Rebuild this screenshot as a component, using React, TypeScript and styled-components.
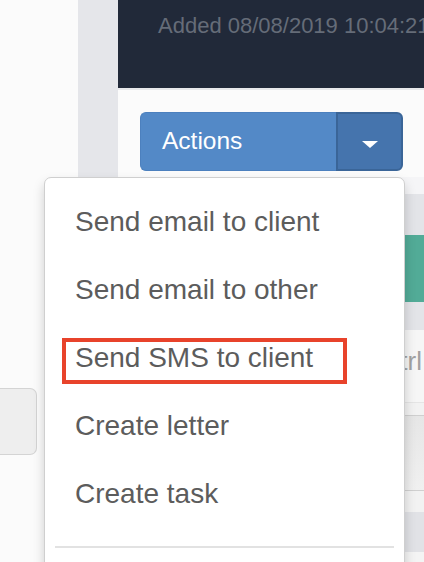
import styled, { createGlobalStyle } from "styled-components";

const GlobalStyle = createGlobalStyle`
    html, body {
        margin: 0;
        padding: 0;
        background: #fbfbfb;
    }
    *, *::before, *::after {
        box-sizing: border-box;
    }
`;

const Page = styled.div`
    width: 424px;
    height: 562px;
    overflow: hidden;
    display: flex;
    flex-direction: row;
    font-family: "Liberation Sans", Arial, Helvetica, sans-serif;
    background: #fbfbfb;
`;

const Sidebar = styled.div`
    width: 78px;
    flex-shrink: 0;
    padding-top: 388px;
    background: #fbfbfb;
`;

const SideButton = styled.div`
    width: 37px;
    height: 67px;
    background: #eeeeee;
    border: 1.5px solid #d4d4d4;
    border-left: none;
    border-radius: 0 7px 7px 0;
`;

const Gutter = styled.div`
    width: 40px;
    flex-shrink: 0;
    background: #e5e6ea;
`;

const Main = styled.div`
    flex: 1;
    min-width: 0;
    display: flex;
    flex-direction: column;

    & > * {
        flex-shrink: 0;
    }
`;

const Header = styled.div`
    height: 90px;
    padding: 13px 0 0 40px;
    background: #212939;
    color: #656c78;
    font-size: 22px;
    line-height: 26px;
    white-space: nowrap;
    overflow: hidden;
    border-bottom: 2px solid #e8e9ec;
`;

const ButtonBar = styled.div`
    padding: 22px 21px 6px 22px;
    background: #fbfbfb;
`;

const ActionsGroup = styled.div`
    position: relative;
    display: flex;
    height: 59px;
`;

const ActionsButton = styled.div`
    flex: 1;
    display: flex;
    align-items: center;
    padding-left: 21px;
    background: #5389c7;
    border: 1px solid #4c80be;
    border-right: none;
    border-radius: 6px 0 0 6px;
    color: #ffffff;
    font-size: 24.5px;
    line-height: 1;
`;

const CaretButton = styled.div`
    width: 67px;
    display: flex;
    justify-content: center;
    align-items: center;
    background: #4574ad;
    border: 2px solid #3a6598;
    border-radius: 0 6px 6px 0;
`;

const Caret = styled.span`
    margin-top: 5px;
    width: 0;
    height: 0;
    border-top: 7px solid #ffffff;
    border-left: 8px solid transparent;
    border-right: 8px solid transparent;
`;

const Menu = styled.div`
    position: absolute;
    top: calc(100% + 6px);
    left: -96px;
    width: 361px;
    height: 420px;
    padding: 10px 0 40px;
    background: #ffffff;
    border: 1px solid #cfcfcf;
    border-radius: 7px;
    box-shadow: 0 6px 12px rgba(0, 0, 0, 0.175);
    z-index: 10;
`;

const MenuItem = styled.div<{ $marked?: boolean }>`
    position: relative;
    height: 68px;
    padding-left: 30px;
    color: #5c5c5c;
    font-size: 28px;
    line-height: 68px;
    white-space: nowrap;

    ${({ $marked }) => $marked && `
        &::after {
            content: "";
            position: absolute;
            left: 17px;
            top: 14px;
            width: 285px;
            height: 46px;
            border: 4px solid #e8432b;
        }
    `}
`;

const MenuDivider = styled.div`
    height: 2px;
    margin: 18px 10px 0;
    background: #e2e2e2;
`;

const Band = styled.div<{ $h: number; $bg: string }>`
    height: ${({ $h }) => $h}px;
    background: ${({ $bg }) => $bg};
`;

const InputBand = styled.div`
    height: 72px;
    padding: 16px 2px 0 0;
    background: #f6f6f6;
    color: #a2a2a2;
    font-size: 26px;
    line-height: 30px;
    text-align: right;
`;

const items = [
    "Send email to client",
    "Send email to other",
    "Send SMS to client",
    "Create letter",
    "Create task",
];

export default function App() {
    return (
        <>
            <GlobalStyle />
            <Page>
                <Sidebar>
                    <SideButton />
                </Sidebar>
                <Gutter />
                <Main>
                    <Header>Added 08/08/2019 10:04:21</Header>

                    <ButtonBar>
                        <ActionsGroup>
                            <ActionsButton>Actions</ActionsButton>
                            <CaretButton>
                                <Caret />
                            </CaretButton>

                            <Menu>
                                {items.map((label) => (
                                    <MenuItem key={label} $marked={label === "Send SMS to client"}>
                                        {label}
                                    </MenuItem>
                                ))}
                                <MenuDivider />
                            </Menu>
                        </ActionsGroup>
                    </ButtonBar>

                    <Band $h={17} $bg="#f5f5f7" />
                    <Band $h={41} $bg="#e3e4e8" />
                    <Band $h={67} $bg="#52ab97" />
                    <Band $h={28} $bg="#e3e4e8" />
                    <InputBand>Ctrl</InputBand>
                    <Band $h={1} $bg="#e5e5e5" />
                    <Band $h={12} $bg="#f2f2f2" />
                    <Band $h={1} $bg="#cfcfcf" />
                    <Band $h={74} $bg="linear-gradient(#e6e6e6, #f0f0f0)" />
                    <Band $h={1} $bg="#d0d0d0" />
                    <Band $h={21} $bg="#f2f2f2" />
                    <Band $h={40} $bg="#e1e2e6" />
                    <Band $h={40} $bg="#f4f4f4" />
                </Main>
            </Page>
        </>
    );
}
